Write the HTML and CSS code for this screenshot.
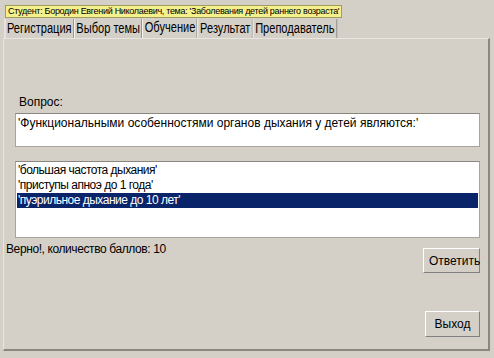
FILE: index.html
```html
<!DOCTYPE html>
<html>
<head>
    <title>Обучение</title>
    <link rel="stylesheet" href="styles.css">
</head>
<body>
    <div class="window">
        <div class="caption">Студент: Бородин Евгений Николаевич, тема: 'Заболевания детей раннего возраста'</div>
        <div class="tabs">
            <span class="tab">Регистрация</span>
            <span class="tab">Выбор темы</span>
            <span class="tab active">Обучение</span>
            <span class="tab">Результат</span>
            <span class="tab">Преподаватель</span>
        </div>
        <div class="panel">
            <div class="label">Вопрос:</div>
            <div class="question">'Функциональными особенностями органов дыхания у детей являются:'</div>
            <div class="answers">
                <div class="item">'большая частота дыхания'</div>
                <div class="item">'приступы апноэ до 1 года'</div>
                <div class="item selected">'пуэрильное дыхание до 10 лет'</div>
            </div>
            <div class="result">Верно!, количество баллов: 10</div>
            <div class="row">
                <button type="button" class="btn answer">Ответить</button>
            </div>
            <div class="row bottom">
                <button type="button" class="btn">Выход</button>
            </div>
        </div>
    </div>
</body>
</html>
```

FILE: styles.css
```css
body {
    margin: 0;
    background-color: #d4d0c8;
    font-family: "Liberation Sans", Arial, sans-serif;
    font-size: 12px;
    color: #000;
}
.window {
    width: 494px;
    height: 358px;
    padding: 3px 4px 0 3px;
    box-sizing: border-box;
}
.caption {
    display: inline-block;
    margin-left: 2px;
    padding: 0 2px;
    height: 11px;
    line-height: 11px;
    font-size: 9px;
    letter-spacing: -0.3px;
    background-color: #f4f08c;
    border: 1px solid #a09c60;
}
.tabs {
    display: flex;
    margin-top: 1px;
    padding-left: 2px;
    height: 19px;
    transform: scaleX(0.79);
    transform-origin: left;
}
.tab {
    padding: 0 2px;
    font-size: 14px;
    line-height: 19px;
    border-right: 1px solid #808080;
    border-left: 1px solid #fff;
}
.tab.active {
    line-height: 17px;
}
.panel {
    height: 313px;
    border-right: 2px solid #8a8680;
    border-bottom: 2px solid #8a8680;
    border-top: 1px solid #e8e6e0;
    border-left: 1px solid #e8e6e0;
    box-sizing: border-box;
    padding: 56px 8px 0 11px;
}
.label {
    padding-left: 4px;
    height: 18px;
}
.question {
    height: 34px;
    background: #fff;
    border: 1px solid #a8a49c;
    border-top-color: #8a8680;
    padding: 2px 2px 0;
    box-sizing: border-box;
}
.answers {
    margin-top: 14px;
    height: 77px;
    background: #fff;
    border: 1px solid #a8a49c;
    border-top-color: #8a8680;
    padding: 1px 1px 0;
    box-sizing: border-box;
}
.item {
    height: 15px;
    line-height: 15px;
    padding-left: 1px;
    letter-spacing: -0.5px;
}
.item.selected {
    background-color: #0a246a;
    color: #fff;
}
.result {
    margin-left: -9px;
    margin-top: 4px;
    height: 15px;
    letter-spacing: -0.4px;
}
.row {
    display: flex;
    justify-content: flex-end;
}
.btn {
    font-family: inherit;
    font-size: 12px;
    background-color: #d4d0c8;
    border: 1px solid;
    border-color: #fff #808080 #808080 #fff;
    height: 25px;
    padding: 0 5px;
}
.answer {
    margin-top: -9px;
    width: 57px;
}
.bottom {
    margin-top: 38px;
}
.bottom .btn {
    width: 55px;
    height: 26px;
}
```
